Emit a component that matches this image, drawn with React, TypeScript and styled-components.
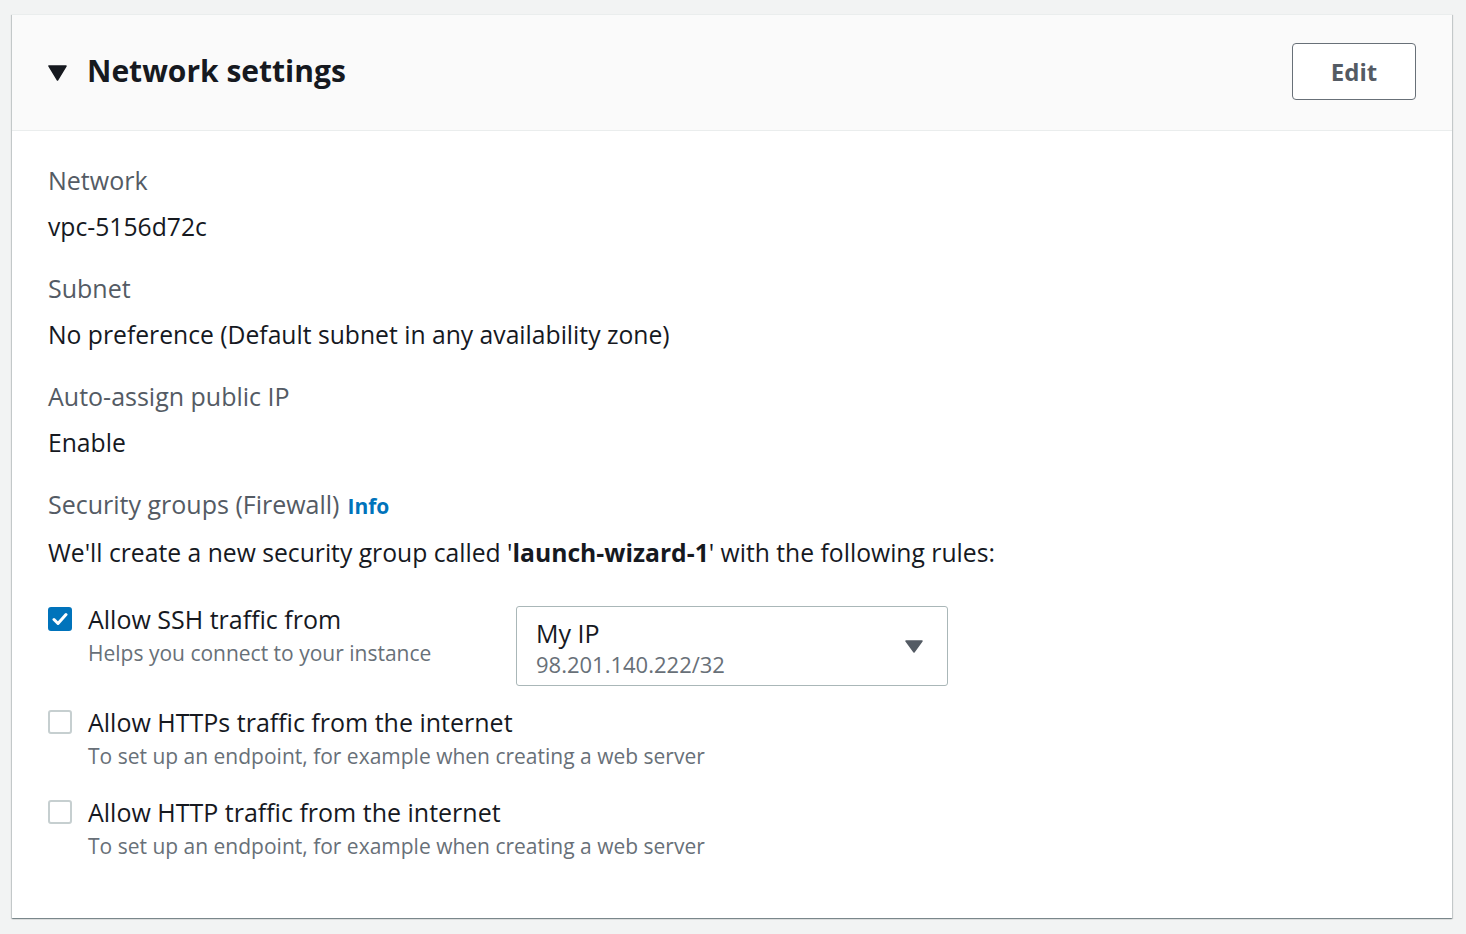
import React from "react";
import styled, { createGlobalStyle } from "styled-components";

const GlobalStyle = createGlobalStyle`
  html, body { margin: 0; padding: 0; background: #f2f3f3; }
  body { font-family: "Open Sans", "Noto Sans", "Liberation Sans", sans-serif; color: #16191f; }
  * { box-sizing: border-box; }
`;

const Page = styled.div`
  padding: 14px 14px 16px 12px;
  background: #f2f3f3;
  min-height: 934px;
`;

const Card = styled.section`
  background: #ffffff;
  box-shadow: 0 1px 1px 0 rgba(0, 28, 36, 0.3), 1px 1px 1px 0 rgba(0, 28, 36, 0.15),
    -1px 1px 1px 0 rgba(0, 28, 36, 0.15);
  border-top: 1px solid #eaeded;
`;

const Header = styled.header`
  height: 116px;
  background: #fafafa;
  border-bottom: 1px solid #eaeded;
  display: flex;
  align-items: center;
  justify-content: space-between;
  padding: 0 36px 0 36px;
`;

const TitleGroup = styled.div`
  display: flex;
  align-items: center;
  gap: 20px;
`;

const Caret = styled.svg`
  width: 19px;
  height: 16px;
`;

const Title = styled.h2`
  margin: 0 0 4px 0;
  font-size: 30px;
  font-weight: 700;
  color: #16191f;
`;

const EditButton = styled.button`
  width: 124px;
  height: 57px;
  margin-bottom: 2px;
  border: 1px solid #687078;
  border-radius: 4px;
  background: #ffffff;
  color: #545b64;
  font-family: inherit;
  font-size: 24px;
  font-weight: 700;
  cursor: pointer;
`;

const Body = styled.div`
  padding: 33px 36px 56px 36px;
`;

const Field = styled.div`
  margin-bottom: 29px;
`;

const Label = styled.div`
  font-size: 25px;
  line-height: 32px;
  color: #545b64;
  margin-bottom: 15px;
`;

const InfoLink = styled.a`
  color: #0073bb;
  font-weight: 700;
  font-size: 21px;
  margin-left: 8px;
  text-decoration: none;
`;

const Value = styled.div`
  font-size: 24.7px;
  line-height: 32px;
  color: #16191f;
`;

const Rules = styled.div`
  display: flex;
  flex-direction: column;
  margin-top: 34px;
`;

const RuleRow = styled.div<{ $gap: number }>`
  display: flex;
  align-items: flex-start;
  margin-bottom: ${(p) => p.$gap}px;
`;

const CheckLine = styled.label`
  display: flex;
  align-items: flex-start;
  gap: 16px;
  width: 468px;
  flex: none;
`;

const WideCheckLine = styled(CheckLine)`
  width: auto;
`;

const Box = styled.span<{ $checked: boolean }>`
  width: 24px;
  height: 24px;
  margin-top: 4px;
  flex: none;
  border-radius: 3px;
  border: 2px solid ${(p) => (p.$checked ? "#0073bb" : "#c6cfd0")};
  background: ${(p) => (p.$checked ? "#0073bb" : "#ffffff")};
  display: flex;
  align-items: center;
  justify-content: center;
`;

const CheckText = styled.div`
  display: flex;
  flex-direction: column;
  gap: 2px;
`;

const CheckLabel = styled.div`
  font-size: 25px;
  line-height: 32px;
  color: #16191f;
  white-space: nowrap;
`;

const CheckDesc = styled.div`
  font-size: 21px;
  line-height: 32px;
  color: #687078;
  white-space: nowrap;
`;

const Select = styled.div`
  margin-top: 3px;
  width: 432px;
  height: 80px;
  border: 1px solid #aab7b8;
  border-radius: 3px;
  padding: 0 24px 0 19px;
  display: flex;
  justify-content: space-between;
  align-items: center;
`;

const SelectText = styled.div`
  display: flex;
  flex-direction: column;
  align-self: flex-start;
  padding-top: 10px;
`;

const SelectMain = styled.div`
  font-size: 25px;
  line-height: 32px;
  color: #16191f;
`;

const SelectSub = styled.div`
  font-size: 22px;
  line-height: 30px;
  color: #687078;
`;

const rules = [
  { label: "Allow HTTPs traffic from the internet", gap: 24 },
  { label: "Allow HTTP traffic from the internet", gap: 0 },
];

const Check = ({ checked }: { checked: boolean }) => (
  <Box $checked={checked}>
    {checked && (
      <svg width="16" height="14" viewBox="0 0 16 14">
        <path d="M2 7.5 L6 11.5 L14 2.5" fill="none" stroke="#fff" strokeWidth="3" strokeLinecap="round" strokeLinejoin="round" />
      </svg>
    )}
  </Box>
);

export default function App() {
  return (
    <Page>
      <GlobalStyle />
      <Card>
        <Header>
          <TitleGroup>
            <Caret viewBox="0 0 19 16">
              <path d="M1 1 H18 L9.5 15 Z" fill="#16191f" stroke="#16191f" strokeWidth="1.5" strokeLinejoin="round" />
            </Caret>
            <Title>Network settings</Title>
          </TitleGroup>
          <EditButton>Edit</EditButton>
        </Header>
        <Body>
          <Field>
            <Label>Network</Label>
            <Value>vpc-5156d72c</Value>
          </Field>
          <Field>
            <Label>Subnet</Label>
            <Value>No preference (Default subnet in any availability zone)</Value>
          </Field>
          <Field>
            <Label>Auto-assign public IP</Label>
            <Value>Enable</Value>
          </Field>
          <div>
            <Label>
              Security groups (Firewall)<InfoLink href="#">Info</InfoLink>
            </Label>
            <Value>
              We'll create a new security group called '<b>launch-wizard-1</b>' with the following rules:
            </Value>
          </div>
          <Rules>
            <RuleRow $gap={20}>
              <CheckLine>
                <Check checked />
                <CheckText>
                  <CheckLabel>Allow SSH traffic from</CheckLabel>
                  <CheckDesc>Helps you connect to your instance</CheckDesc>
                </CheckText>
              </CheckLine>
              <Select>
                <SelectText>
                  <SelectMain>My IP</SelectMain>
                  <SelectSub>98.201.140.222/32</SelectSub>
                </SelectText>
                <svg width="18" height="13" viewBox="0 0 18 13">
                  <path d="M1 1 H17 L9 12 Z" fill="#545b64" stroke="#545b64" strokeWidth="1.5" strokeLinejoin="round" />
                </svg>
              </Select>
            </RuleRow>
            {rules.map((r) => (
              <RuleRow key={r.label} $gap={r.gap}>
                <WideCheckLine>
                  <Check checked={false} />
                  <CheckText>
                    <CheckLabel>{r.label}</CheckLabel>
                    <CheckDesc>To set up an endpoint, for example when creating a web server</CheckDesc>
                  </CheckText>
                </WideCheckLine>
              </RuleRow>
            ))}
          </Rules>
        </Body>
      </Card>
    </Page>
  );
}
